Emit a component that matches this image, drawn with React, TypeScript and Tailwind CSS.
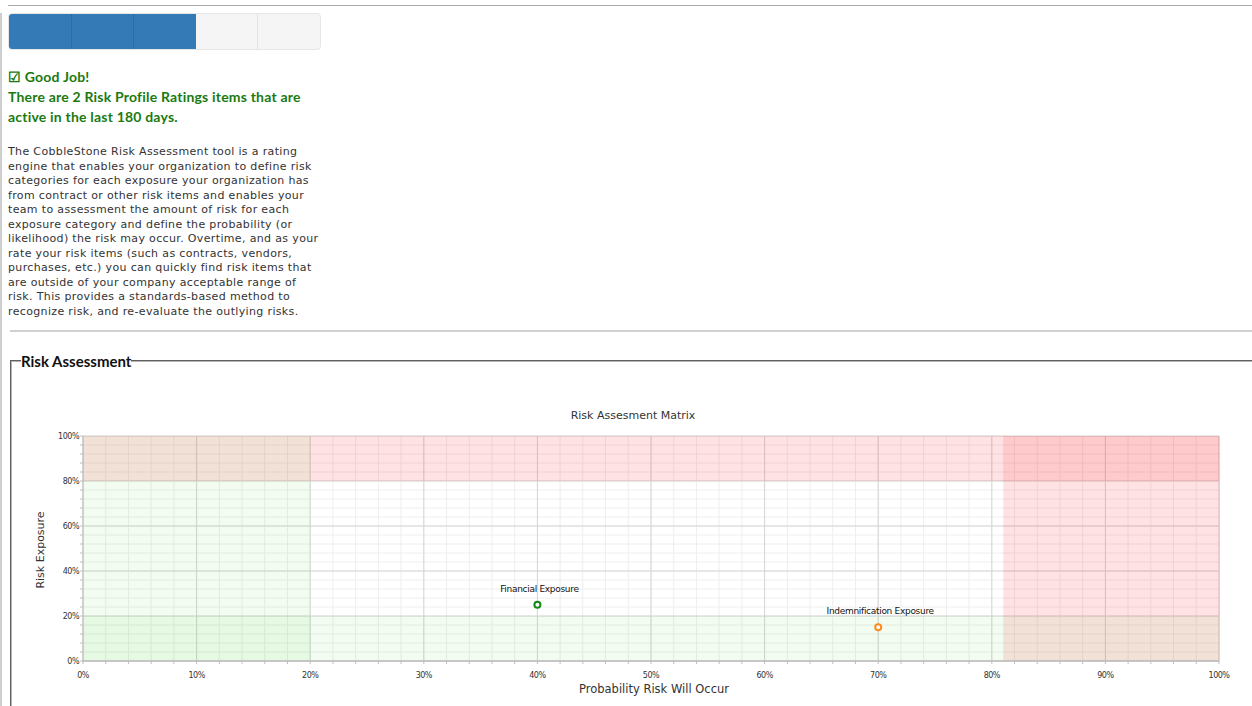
import React from "react";

const X0 = 83;
const X1 = 1219;
const Y0 = 436;
const Y1 = 661;
const px = (p: number) => X0 + ((X1 - X0) * p) / 100;
const py = (p: number) => Y1 - ((Y1 - Y0) * p) / 100;

const points = [
  { name: "Financial Exposure", x: 40, y: 25, color: "#138a13" },
  { name: "Indemnification Exposure", x: 70, y: 15, color: "#ff8a1c" },
];

const paragraph = [
  "The CobbleStone Risk Assessment tool is a rating",
  "engine that enables your organization to define risk",
  "categories for each exposure your organization has",
  "from contract or other risk items and enables your",
  "team to assessment the amount of risk for each",
  "exposure category and define the probability (or",
  "likelihood) the risk may occur. Overtime, and as your",
  "rate your risk items (such as contracts, vendors,",
  "purchases, etc.) you can quickly find risk items that",
  "are outside of your company acceptable range of",
  "risk. This provides a standards-based method to",
  "recognize risk, and re-evaluate the outlying risks.",
];

const SVG_TOP = 371;
const FONT = "DejaVu Sans, Verdana, sans-serif";

function RiskMatrix() {
  const minorX = Array.from({ length: 51 }, (_, i) => i * 2);
  const minorY = Array.from({ length: 26 }, (_, i) => i * 4);
  const majorX = Array.from({ length: 11 }, (_, i) => i * 10);
  const majorY = [0, 20, 40, 60, 80, 100];

  return (
    <svg
      width={1240}
      height={335}
      viewBox={`12 ${SVG_TOP} 1240 335`}
      className="block"
    >
      <text x={633} y={419} textAnchor="middle" fontSize={11} fill="#333" fontFamily={FONT}>
        Risk Assesment Matrix
      </text>

      {/* grid */}
      {minorX.map((p) => (
        <line key={"mx" + p} x1={px(p)} x2={px(p)} y1={Y0} y2={Y1} stroke="#eeeeee" />
      ))}
      {minorY.map((p) => (
        <line key={"my" + p} x1={X0} x2={X1} y1={py(p)} y2={py(p)} stroke="#eeeeee" />
      ))}
      {majorX.map((p) => (
        <line key={"Mx" + p} x1={px(p)} x2={px(p)} y1={Y0} y2={Y1} stroke="#d6d6d6" />
      ))}
      {majorY.map((p) => (
        <line key={"My" + p} x1={X0} x2={X1} y1={py(p)} y2={py(p)} stroke="#d6d6d6" />
      ))}

      {/* zones */}
      <rect x={X0} y={Y0} width={X1 - X0} height={py(80) - Y0} fill="rgba(255,0,10,0.11)" />
      <rect x={px(81)} y={Y0} width={X1 - px(81)} height={Y1 - Y0} fill="rgba(255,0,10,0.11)" />
      <rect x={X0} y={Y0} width={px(20) - X0} height={Y1 - Y0} fill="rgba(40,200,20,0.06)" />
      <rect x={X0} y={py(20)} width={X1 - X0} height={Y1 - py(20)} fill="rgba(40,200,20,0.06)" />

      {/* axes */}
      <line x1={X0} x2={X0} y1={Y0} y2={Y1 + 1} stroke="#bdbdbd" />
      <line x1={X1 + 0.5} x2={X1 + 0.5} y1={Y0} y2={Y1} stroke="#d6d6d6" />
      <line x1={X0} x2={X1} y1={Y1} y2={Y1} stroke="#bdbdbd" strokeWidth={1.5} />
      {minorY.map((p) => (
        <line key={"ty" + p} x1={X0 - 3} x2={X0} y1={py(p)} y2={py(p)} stroke="#bdbdbd" />
      ))}
      {minorX.map((p) => (
        <line key={"tx" + p} x1={px(p)} x2={px(p)} y1={Y1} y2={Y1 + 3} stroke="#bdbdbd" />
      ))}

      {majorY.map((p) => (
        <text key={"ly" + p} x={79} y={py(p) + 3} textAnchor="end" fontSize={8} letterSpacing={-0.5} fill="#333" fontFamily={FONT}>
          {p}%
        </text>
      ))}
      {majorX.map((p) => (
        <text key={"lx" + p} x={px(p)} y={678} textAnchor="middle" fontSize={8} letterSpacing={-0.5} fill="#333" fontFamily={FONT}>
          {p}%
        </text>
      ))}

      <text
        x={0}
        y={0}
        transform="translate(44 550) rotate(-90)"
        textAnchor="middle"
        fontSize={11}
        fill="#333"
        fontFamily={FONT}
      >
        Risk Exposure
      </text>
      <text x={654} y={693} textAnchor="middle" fontSize={11.5} fill="#333" fontFamily={FONT}>
        Probability Risk Will Occur
      </text>

      {points.map((pt) => (
        <g key={pt.name}>
          <text
            x={px(pt.x) + 2}
            y={py(pt.y) - 13}
            textAnchor="middle"
            fontSize={9}
            letterSpacing={-0.3}
            fill="#111"
            fontFamily={FONT}
          >
            {pt.name}
          </text>
          <circle cx={px(pt.x)} cy={py(pt.y)} r={3} fill="#fff" stroke={pt.color} strokeWidth={2} />
        </g>
      ))}
    </svg>
  );
}

export default function App() {
  return (
    <div className="min-h-screen bg-white pt-[5px] font-['DejaVu_Sans',sans-serif] text-[#333]">
      <div className="ml-2 h-px bg-[#aaa]" />
      <div className="mt-[7px] border-l-2 border-[#cfcfcf]">
        <div className="pl-[6px]">
          <div className="flex h-[37px] w-[313px] overflow-hidden rounded-[4px] border border-[#e6e6e6] bg-[#f5f5f5]">
            <div className="flex-1 border-r border-[#2e6ca3] bg-[#337ab7]" />
            <div className="flex-1 border-r border-[#2e6ca3] bg-[#337ab7]" />
            <div className="flex-1 bg-[#337ab7]" />
            <div className="flex-1 border-r border-[#e3e3e3]" />
            <div className="flex-1" />
          </div>

          <div className="mt-[17px] font-['Lato',sans-serif] text-[14px] font-bold leading-[20px] tracking-[0.2px] text-[#1a7a10]">
            <div>☑ Good Job!</div>
            <div>There are 2 Risk Profile Ratings items that are</div>
            <div>active in the last 180 days.</div>
          </div>

          <div className="mt-[18px] text-[11px] leading-[14.5px] tracking-[0.35px] text-[#333]">
            {paragraph.map((l) => (
              <div key={l} className="whitespace-nowrap">
                {l}
              </div>
            ))}
          </div>

          <div className="ml-[2px] mt-[11px] h-[2px] bg-[#d0d0d0]" />
        </div>

        <fieldset className="ml-[8px] mt-[19px] border-2 border-r-0 border-b-0 border-[#b4b4b4] [border-style:groove]">
          <legend className="ml-[9px] font-['Lato',sans-serif] text-[15px] font-bold leading-[20px] text-[#111]">
            Risk Assessment
          </legend>
          <RiskMatrix />
        </fieldset>
      </div>
    </div>
  );
}
